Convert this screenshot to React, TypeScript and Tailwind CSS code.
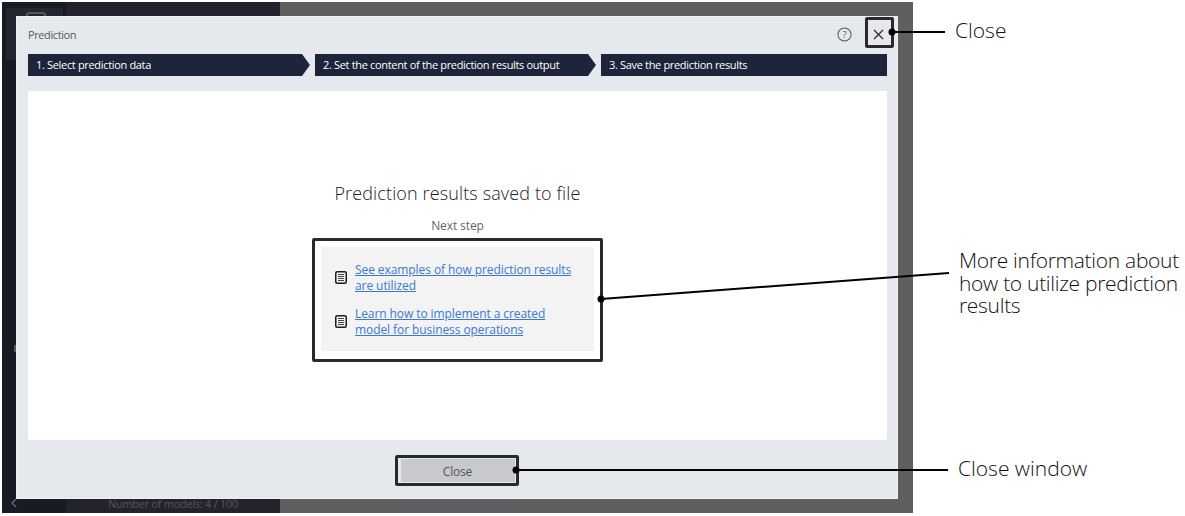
import React from 'react';

const font = { fontFamily: '"Open Sans", "Noto Sans", sans-serif' };

const DocIcon = () => (
  <svg width="12" height="13" viewBox="0 0 12 13" className="shrink-0">
    <rect x="0.75" y="0.75" width="10.5" height="11.5" rx="1.5" fill="#f0f0f0" stroke="#1c1c1c" strokeWidth="1.5" />
    <path d="M3 3.5h6M3 5.5h6M3 7.5h6M3 9.5h6" stroke="#444" strokeWidth="1" />
  </svg>
);

const Step = ({ label, first, last }: { label: string; first?: boolean; last?: boolean }) => (
  <div
    className={
      'flex items-center h-[22px] bg-[#1e2439] text-white text-[11px] tracking-[-0.33px] pl-[8px] ' +
      (first ? 'w-[282px] ' : last ? 'flex-1 ' : 'w-[281px] ') +
      (last ? '' : '[clip-path:polygon(0_0,calc(100%-8px)_0,100%_50%,calc(100%-8px)_100%,0_100%)]')
    }
  >
    {label}
  </div>
);

const DocLink = ({ lines }: { lines: string }) => (
  <div className="flex items-center gap-[8px]">
    <DocIcon />
    <a className="text-[12px] tracking-[-0.08px] leading-[15.5px] text-[#3a78d4] underline w-[225px]">{lines}</a>
  </div>
);

export default function App() {
  return (
    <div className="relative w-[1185px] h-[516px] bg-white overflow-hidden" style={font}>
      {/* Dimmed app behind the dialog */}
      <div className="flex w-[911px] h-[511px] mt-[2px] ml-[2px] absolute top-0 left-0">
        <div className="w-[64px] bg-[#171b22] relative">
          <div className="mt-[6px] ml-[4px] w-[57px] h-[52px] bg-[#23262d] pt-[4px] pl-[20px]">
            <div className="w-[20px] h-[12px] border-[2px] border-[#55575c] rounded-[3px]" />
          </div>
          <div className="absolute left-[12px] top-[343px] w-[3px] h-[7px] bg-[#55575c]" />
          <svg width="6" height="10" viewBox="0 0 6 10" className="absolute left-[9px] bottom-[5px]">
            <path d="M5 1L1 5l4 4" fill="none" stroke="#6b6e73" strokeWidth="1.3" />
          </svg>
        </div>
        <div className="w-[214px] bg-[#22232b] flex flex-col justify-end items-center pb-[2px]">
          <span className="text-[11px] tracking-[-0.28px] leading-[14px] text-[#55565c]">Number of models: 4 / 100</span>
        </div>
        <div className="flex-1 bg-[#5f5f5f]" />
      </div>

      {/* Dialog */}
      <div className="absolute left-[16px] top-[16px] w-[882px] h-[483px] bg-[#e5e8ed] ring-1 ring-inset ring-[#eef0f3] flex flex-col pl-[12px] pr-[11px]">
        <div className="flex items-center justify-between h-[38px] shrink-0">
          <span className="text-[11px] tracking-[-0.4px] text-[#5a5a5a]">Prediction</span>
          <div className="flex items-center gap-[21px] -mt-[2px] mr-[3px]">
            <svg width="15" height="15" viewBox="0 0 16 16">
              <circle cx="8" cy="8" r="7" fill="none" stroke="#555" strokeWidth="1.1" />
              <text x="8" y="11.5" textAnchor="middle" fontSize="10" fill="#555">?</text>
            </svg>
            <svg width="11" height="11" viewBox="0 0 11 11">
              <path d="M1 1l9 9M10 1l-9 9" stroke="#333" strokeWidth="1.4" />
            </svg>
          </div>
        </div>
        <div className="flex gap-[5px] shrink-0">
          <Step first label="1. Select prediction data" />
          <Step label="2. Set the content of the prediction results output" />
          <Step last label="3. Save the prediction results" />
        </div>
        <div className="mt-[15px] h-[349px] bg-white flex flex-col items-center pt-[89px] shrink-0">
          <h2 className="text-[18px] font-light tracking-[0.13px] leading-[26px] text-[#222]">Prediction results saved to file</h2>
          <p className="mt-[12px] text-[12px] tracking-[-0.1px] leading-[16px] text-[#666]">Next step</p>
          <div className="mt-[13px] w-[273px] h-[104px] bg-[#f3f3f3] flex flex-col justify-center gap-[13px] pl-[14px] pt-[1px]">
            <DocLink lines="See examples of how prediction results are utilized" />
            <DocLink lines="Learn how to implement a created model for business operations" />
          </div>
        </div>
        <div className="flex justify-center pt-[19px]">
          <button className="w-[114px] h-[23px] pt-[2px] bg-[#c8c9cd] text-[12px] tracking-[-0.2px] text-[#4f5464]">Close</button>
        </div>
      </div>

      {/* Annotation boxes */}
      <div className="absolute left-[865px] top-[17px] w-[29px] h-[31px] border-[3px] border-[#2a2a2a] rounded-[2px]" />
      <div className="absolute left-[312px] top-[238px] w-[291px] h-[124px] border-[3px] border-[#2a2a2a] rounded-[2px]" />
      <div className="absolute left-[395px] top-[455px] w-[124px] h-[31px] border-[3px] border-[#2a2a2a] rounded-[2px]" />

      {/* Leader lines */}
      <svg className="absolute inset-0" width="1185" height="516">
        <path d="M892 32H945" stroke="#000" strokeWidth="2" />
        <circle cx="892" cy="32" r="3.5" fill="#000" />
        <path d="M601 299L949 273" stroke="#000" strokeWidth="2" />
        <circle cx="601" cy="299" r="3.5" fill="#000" />
        <path d="M516 470H948" stroke="#000" strokeWidth="2" />
        <circle cx="516" cy="470" r="3.5" fill="#000" />
      </svg>

      {/* Annotation labels */}
      <div className="absolute left-[955px] top-[16px] text-[21px] font-light leading-[28px] text-[#111]">Close</div>
      <div className="absolute left-[959px] top-[249px] w-[226px] text-[21px] font-light tracking-[-0.3px] leading-[22.5px] text-[#111]">
        More information about how to utilize prediction results
      </div>
      <div className="absolute left-[958px] top-[454px] text-[21px] font-light leading-[28px] text-[#111]">Close window</div>
    </div>
  );
}
